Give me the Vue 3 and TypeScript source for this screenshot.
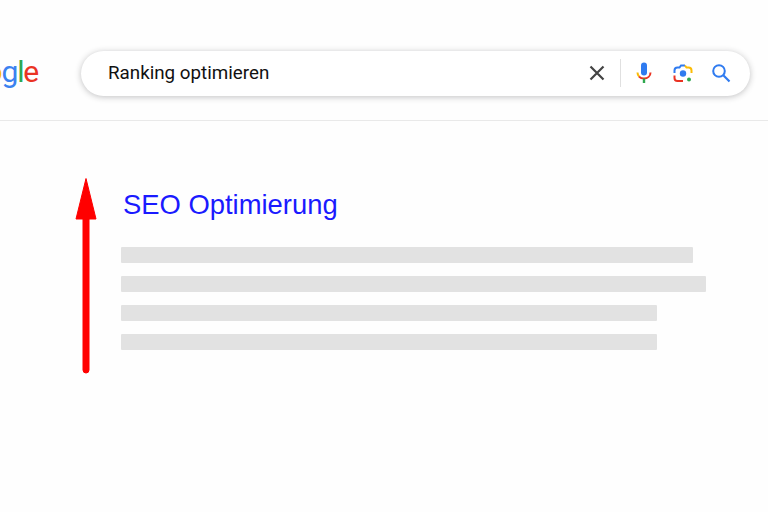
<script setup lang="ts">
const logo = [
  { ch: "G", color: "#3b82f0" },
  { ch: "o", color: "#ea3323" },
  { ch: "o", color: "#fbbc05" },
  { ch: "g", color: "#3b82f0" },
  { ch: "l", color: "#2fa84f" },
  { ch: "e", color: "#ea3323" },
];

const lines = [572, 585, 536, 536];
</script>

<template>
  <div class="page">
    <header class="header">
      <div class="logo">
        <span v-for="(l, i) in logo" :key="i" :style="{ color: l.color }">{{ l.ch }}</span>
      </div>
      <div class="search">
        <span class="query">Ranking optimieren</span>
        <svg class="clear" width="24" height="24" viewBox="0 0 24 24">
          <path d="M5.5 5.5 18.5 18.5M18.5 5.5 5.5 18.5" stroke="#444" stroke-width="2.2" fill="none" />
        </svg>
        <span class="divider"></span>
        <svg class="mic" width="24" height="24" viewBox="0 0 24 24" fill="none">
          <rect x="9" y="1.5" width="6" height="13" rx="3" fill="#2f7bf0" />
          <path d="M5.5 11.5c0 1.600.6 3 1.600 4" stroke="#fbbc05" stroke-width="2" />
          <path d="M18.500 11.500c0 3.600-2.900 6-6.500 6s-4-1-4.900-2" stroke="#ea3323" stroke-width="2" />
          <path d="M12 17.500V22" stroke="#2fa84f" stroke-width="2.400" />
        </svg>
        <svg class="lens" width="24" height="24" viewBox="0 0 24 24" fill="none">
          <path d="M3.500 12V9.500A3 3 0 0 1 6.500 6.500H8.500L10 4.500H14" stroke="#2f7bf0" stroke-width="2" />
          <path d="M14 4.500 15.500 6.500H17.500A3 3 0 0 1 20.500 9.500V12" stroke="#fbbc05" stroke-width="2" />
          <path d="M3.500 14.500V17A3 3 0 0 0 6.500 20H12" stroke="#ea3323" stroke-width="2" />
          <circle cx="12" cy="12.500" r="3.200" fill="#2f7bf0" />
          <circle cx="18" cy="18.500" r="2" fill="#2fa84f" />
        </svg>
        <svg class="magnifier" width="24" height="24" viewBox="0 0 24 24" fill="none">
          <circle cx="10" cy="10" r="5.800" stroke="#2f7bf0" stroke-width="2" />
          <path d="M14.300 14.300 20.500 20.500" stroke="#2f7bf0" stroke-width="2.200" />
        </svg>
      </div>
    </header>

    <main class="result">
      <h3 class="title">SEO Optimierung</h3>
      <div class="lines">
        <div v-for="(w, i) in lines" :key="i" class="line" :style="{ width: w + 'px' }"></div>
      </div>
    </main>

    <svg class="arrow" width="30" height="200" viewBox="0 0 30 200">
      <path d="M15 2.500 L25 43 H18 V194 a3 3 0 0 1 -6 0 V43 H5 Z" fill="#ff0000" stroke="#ff0000" stroke-width="1" stroke-linejoin="round" />
    </svg>
  </div>
</template>

<style scoped>
.page {
  position: relative;
  width: 768px;
  height: 512px;
  overflow: hidden;
  background: #fefefe;
  font-family: "Liberation Sans", Arial, sans-serif;
}

.header {
  display: flex;
  align-items: center;
  height: 121px;
  box-sizing: border-box;
  padding-top: 28px;
  padding-right: 18px;
  border-bottom: 1px solid #e9e9e9;
}

.logo {
  width: 81px;
  flex: none;
  display: flex;
  justify-content: flex-end;
  padding-right: 43px;
  box-sizing: border-box;
  font-family: Roboto, sans-serif;
  font-size: 30px;
  font-weight: 400;
  letter-spacing: -1.2px;
  white-space: nowrap;
  line-height: 1;
  margin-bottom: 4px;
}

.search {
  flex: 1;
  display: flex;
  align-items: center;
  height: 45px;
  margin-bottom: 2px;
  padding: 0 17px 0 27px;
  background: #fff;
  border-radius: 23px;
  box-shadow: 0 1px 6px rgba(32, 33, 36, 0.28);
}

.query {
  flex: 1;
  font-family: Roboto, sans-serif;
  font-size: 18.8px;
  color: #111;
}

.clear {
  margin-right: 11px;
}

.divider {
  width: 1px;
  height: 28px;
  background: #e0e0e0;
  margin-right: 11px;
}

.mic {
  margin-right: 15px;
}

.lens {
  margin-right: 14px;
}

.result {
  padding: 67px 0 0 121px;
}

.title {
  margin: 0 0 25px 2px;
  font-size: 27.4px;
  font-weight: 400;
  line-height: 34px;
  color: #1a1aff;
}

.lines {
  display: flex;
  flex-direction: column;
  gap: 13px;
}

.line {
  height: 16px;
  border-radius: 1px;
  background: #e2e2e2;
}

.arrow {
  position: absolute;
  left: 71px;
  top: 176px;
}
</style>
